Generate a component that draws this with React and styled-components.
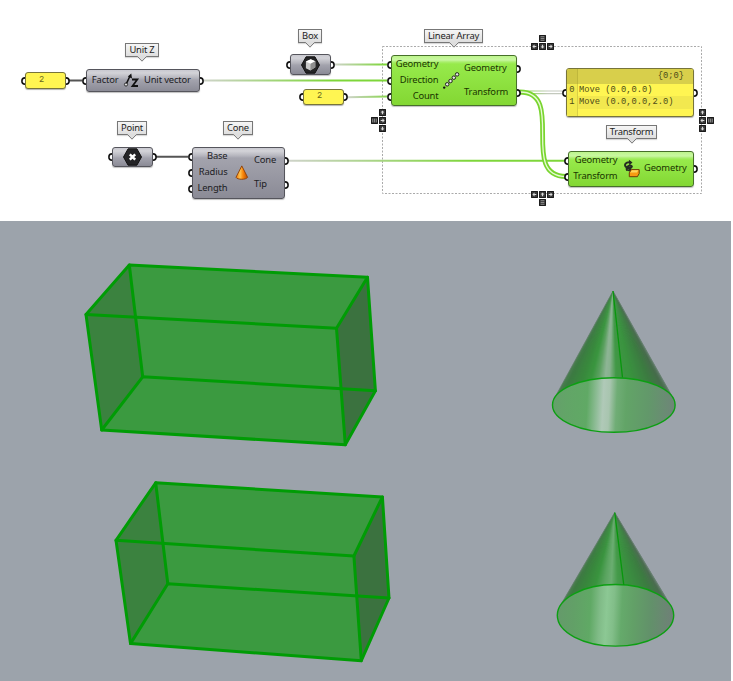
import React from 'react';
import styled, { createGlobalStyle, css } from 'styled-components';

const Global = createGlobalStyle`
  body { margin: 0; background: #fff; font-family: "Noto Sans", "Open Sans", sans-serif; }
  *, *::before, *::after { box-sizing: border-box; }
`;

const Page = styled.main`
  display: flex;
  flex-direction: column;
  width: 733px;
  height: 681px;
  overflow: hidden;
  background: #fff;
`;

const Canvas = styled.section`
  position: relative;
  flex: 0 0 221px;
  background: #fff;
`;

const Viewport = styled.section`
  flex: 1;
  width: 731px;
  background: #9ca3ab;
  svg { display: block; }
`;

const Wires = styled.svg`
  position: absolute;
  inset: 0;
`;

const placed = css`
  position: absolute;
  left: ${(p) => p.$x}px;
  top: ${(p) => p.$y}px;
  width: ${(p) => p.$w}px;
  height: ${(p) => p.$h}px;
`;

const skins = {
  gray: 'linear-gradient(#c9c9d0 0, #d3d3d8 3px, #b4b4bc 8px, #a3a3ad 10px, #8b8b96 100%)',
  green: 'linear-gradient(#bdf58c 0, #c9f7a2 4px, #a9ee6c 6px, #97ea4b 8px, #83d733 100%)',
};

const Node = styled.div`
  ${placed}
  display: flex;
  align-items: center;
  border: 1px solid ${(p) => (p.$skin === 'green' ? '#47702a' : '#55555c')};
  border-radius: 3px;
  background: ${(p) => skins[p.$skin]};
  color: ${(p) => (p.$skin === 'green' ? '#193500' : '#202024')};
  box-shadow: 0 1px 1px rgba(0, 0, 0, 0.25);
`;

const Column = styled.div`
  display: flex;
  flex-direction: column;
  flex: 0 0 ${(p) => p.$w}px;
  height: ${(p) => p.$h}px;
`;

const Row = styled.div`
  position: relative;
  display: flex;
  flex: 1;
  align-items: center;
  justify-content: ${(p) => (p.$side === 'in' ? 'flex-end' : 'flex-start')};
  padding-bottom: 2px;
  font-size: 9.4px;
  letter-spacing: -0.14px;
  line-height: 12px;
  white-space: nowrap;
`;

const IconSlot = styled.div`
  display: flex;
  flex: 1;
  align-items: center;
  justify-content: center;
  svg { display: block; flex: none; overflow: visible; }
`;

const Port = styled.span`
  position: absolute;
  top: calc(50% - 4px);
  ${(p) => (p.$side === 'in' ? 'left: -5px' : 'right: -5px')};
  width: 4px;
  height: 8px;
  svg { display: block; }
`;

const Socket = ({ side }) => (
  <Port $side={side}>
    <svg width="4" height="8" viewBox="0 0 4 8">
      <path
        d={side === 'in' ? 'M4 .9A3.1 3.1 0 0 0 4 7.1' : 'M0 .9A3.1 3.1 0 0 1 0 7.1'}
        fill="#fff"
        stroke="#111"
        strokeWidth="1.6"
      />
    </svg>
  </Port>
);

const Tag = styled.div`
  ${placed}
  display: flex;
  align-items: center;
  justify-content: center;
  border: 1px solid #777;
  background: linear-gradient(#f6f6f6, #dedede);
  color: #222;
  font-size: 9.4px;
  letter-spacing: -0.2px;
  line-height: 12px;
  padding-bottom: 1px;
  white-space: nowrap;
  box-shadow: 0 1px 1px rgba(0, 0, 0, 0.15);
  svg {
    position: absolute;
    left: calc(50% - 5px);
    top: 12px;
  }
`;

const Pointer = () => (
  <svg width="10" height="7" viewBox="0 0 10 7">
    <path d="M.8 0v.5L5 5.2 9.2.5V0z" fill="#dedede" />
    <path d="M.8.8 5 5.2 9.2.8" fill="none" stroke="#777" strokeWidth="1" />
  </svg>
);

const ValuePanel = styled.div`
  ${placed}
  display: flex;
  align-items: center;
  padding: 0 0 2px 13px;
  border: 1px solid #77743a;
  border-radius: 3px;
  background: #fff552;
  box-shadow: 0 1px 1px rgba(0, 0, 0, 0.3);
  color: #66651c;
  font: 8.7px "Liberation Mono", monospace;
`;

const DataPanel = styled.div`
  ${placed}
  display: grid;
  grid-template-columns: 11px 1fr;
  grid-template-rows: 15px 12px 13px 1fr;
  border: 1px solid #77743a;
  border-radius: 3px;
  background: #fff552;
  box-shadow: 0 1px 1px rgba(0, 0, 0, 0.3);
  color: #4d4b18;
  font: 8.75px/12px "Liberation Mono", monospace;
`;

const Path = styled.div`
  grid-column: 1 / 3;
  background: linear-gradient(90deg, #d0c745 10px, #bfb73c 10px 11px, #d8cf4b 11px);
  border-radius: 2px 2px 0 0;
  padding: 1px 9px 0 0;
  text-align: right;
`;

const Index = styled.div`
  border-right: 1px solid #d9d045;
  background: #f3ea4e;
  text-align: center;
`;

const Item = styled.div`
  padding-left: 1px;
  background: ${(p) => (p.$alt ? '#f2e84f' : 'transparent')};
`;

const Key = styled.span`
  ${placed}
  display: flex;
  align-items: center;
  justify-content: center;
  border-radius: 1px;
  background: #383838;
  box-shadow: inset 0 0 0 0.7px #111;
`;

const Glyph = ({ type }) => {
  const turn = { up: 0, right: 90, down: 180, left: 270 }[type];
  return (
    <svg width="7" height="7" viewBox="0.5 0.5 7 7">
      {type === 'menu' ? (
        <path d="M2.2 2.2h3.6M2.2 4h3.6M2.2 5.8h3.6" stroke="#aaa" strokeWidth=".7" />
      ) : type === 'lines' ? (
        <path d="M2.2 2.2v3.6M4 2.2v3.6M5.8 2.2v3.6" stroke="#aaa" strokeWidth=".7" />
      ) : (
        <path d="M4 1.9 5.9 4H4.6v1.8H3.4V4H2.1z" fill="#dcdcdc" transform={`rotate(${turn} 4 4)`} />
      )}
    </svg>
  );
};

const keys = [
  [538.5, 34.5, 'menu'], [530.5, 42.5, 'left'], [538.5, 42.5, 'down'], [546.5, 42.5, 'right'],
  [379, 108.5, 'up'], [371, 116.5, 'lines'], [379, 116.5, 'right'], [379, 124.5, 'down'],
  [698.5, 108.5, 'up'], [698.5, 116.5, 'left'], [706.5, 116.5, 'lines'], [698.5, 124.5, 'down'],
  [530.5, 190.5, 'left'], [538.5, 190.5, 'up'], [546.5, 190.5, 'right'], [538.5, 198.5, 'menu'],
];

const tags = [
  ['Unit Z', 125, 43, 34], ['Point', 117, 121, 30], ['Cone', 223, 121, 30],
  ['Box', 298, 29, 24], ['Linear Array', 424, 29, 59], ['Transform', 606, 125, 51],
];

const ZIcon = () => (
  <svg width="15" height="15" viewBox="0 0 15 15">
    <path d="M2 11.5 6 3" stroke="#111" strokeWidth="1.6" />
    <path d="M7.3.5 8 5.4 3.8 3.4z" fill="#111" />
    <circle cx="2" cy="11.5" r="1.6" fill="#ddd" stroke="#111" strokeWidth=".8" />
    <path d="M8 6.5h5.3L8.5 13H14" fill="none" stroke="#111" strokeWidth="1.8" />
  </svg>
);

const ConeIcon = () => (
  <svg width="14" height="16" viewBox="-0.8 0.3 14 16">
    <defs>
      <linearGradient id="orange">
        <stop offset="0" stopColor="#f47a08" />
        <stop offset=".35" stopColor="#ffc34d" />
        <stop offset=".6" stopColor="#f98509" />
        <stop offset="1" stopColor="#b94b00" />
      </linearGradient>
    </defs>
    <path d="M7 1.2 1.2 12.6c1.2 2.6 10.4 2.6 11.6 0z" fill="url(#orange)" stroke="#8c3d05" strokeWidth=".9" strokeLinejoin="round" />
  </svg>
);

const Hexagon = ({ children }) => (
  <svg width="20" height="18" viewBox="0.5 0 20 18">
    <path d="M5.6.8h8.8L19 9l-4.6 8.2H5.6L1 9z" fill="#242426" stroke="#111" strokeLinejoin="round" />
    {children}
  </svg>
);

const PointIcon = () => (
  <Hexagon>
    <path d="M7.3 6.3 12.7 11.7M12.7 6.3 7.3 11.7" stroke="#fff" strokeWidth="2.4" />
  </Hexagon>
);

const BoxIcon = () => (
  <Hexagon>
    <path d="M5.4 5.6 10.2 3.2 14.8 5.2v6l-4.9 3.4-4.5-2.3z" fill="#c9c9c9" />
    <path d="M5.4 5.6 10.2 3.2 14.8 5.2 10.1 7.8z" fill="#fff" />
    <path d="M10.1 7.8 14.8 5.2v6l-4.9 3.4z" fill="#8e8e8e" />
  </Hexagon>
);

const ArrayIcon = () => (
  <svg width="18" height="18" viewBox="0 0 18 18">
    <circle cx="2.2" cy="15.6" r="1.2" fill="#111" />
    {[[5.2, 12.3], [8.5, 9], [11.8, 5.7], [15.1, 2.4]].map(([x, y]) => (
      <circle key={x} cx={x} cy={y} r="1.75" fill="#e8e8e8" stroke="#222" strokeWidth="1" />
    ))}
  </svg>
);

const TransformIcon = () => (
  <svg width="18" height="18" viewBox="-0.5 0 18 18">
    <path d="M8.5 2.5C3 1.6 1.2 5 3.6 7s7 .2 5.4-1-6.2.6-4.4 4.6" fill="none" stroke="#252b22" strokeWidth="2" />
    <path d="M6.4-.2 10 2.6 6.8 5.4zM4.2 10.4l4.4 1.6.2-4.6z" fill="#252b22" />
    <path d="M6.8 12.8 8.9 9.6h7.8v3.9l-1.8 3.2H6.8z" fill="#f99b12" stroke="#6f3a05" strokeWidth="1" strokeLinejoin="round" />
    <path d="M7.7 12.6 9.3 10.2h6.6l-1.5 2.4z" fill="#ffd65a" />
  </svg>
);

function Component({ x, y, w, h, skin = 'gray', rows = 16, ins = [], outs = [], inW, outW, children }) {
  return (
    <Node $x={x} $y={y} $w={w} $h={h} $skin={skin}>
      <Column $w={inW} $h={rows}>
        {ins.map((t, i) => <Row key={i} $side="in"><Socket side="in" />{t}</Row>)}
      </Column>
      <IconSlot>{children}</IconSlot>
      <Column $w={outW} $h={rows}>
        {outs.map((t, i) => <Row key={i} $side="out">{t}<Socket side="out" /></Row>)}
      </Column>
    </Node>
  );
}

const Fade = ({ id, x1, x2 }) => (
  <linearGradient id={id} gradientUnits="userSpaceOnUse" x1={x1} x2={x2} y1="0" y2="0">
    <stop offset="0" stopColor="#cfd3ca" />
    <stop offset="1" stopColor="#7ed63a" />
  </linearGradient>
);

function WireLayer() {
  const bend = 'M520 92C566 92 519 176.5 566 176.5';
  return (
    <Wires width="733" height="221" fill="none">
      <defs>
        <Fade id="f1" x1="203" x2="330" />
        <Fade id="f2" x1="334" x2="385" />
        <Fade id="f3" x1="347" x2="395" />
        <Fade id="f4" x1="288" x2="470" />
        <linearGradient id="f5" gradientUnits="userSpaceOnUse" x1="520" x2="548" y1="0" y2="0">
          <stop offset="0" stopColor="#7ed63a" />
          <stop offset="1" stopColor="#c3c9bd" />
        </linearGradient>
      </defs>
      <rect x="382.5" y="46.5" width="319" height="147" stroke="#aaa" strokeDasharray="2 1.5" />
      <g strokeWidth="2">
        <path d="M69 80.5H82M156 156.8H188" stroke="#555" />
        <path d="M204 80.6H387" stroke="url(#f1)" />
        <path d="M335 64.5H387" stroke="url(#f2)" />
        <path d="M347 97.3L387 96.5" stroke="url(#f3)" />
        <path d="M288 160.8H565" stroke="url(#f4)" />
      </g>
      <path d="M521 91H562M521 93.6H562" stroke="url(#f5)" strokeWidth="1.1" />
      <path d={bend} stroke="#79d52f" strokeWidth="4.8" />
      <path d={bend} stroke="#e7fad5" strokeWidth="1.3" />
    </Wires>
  );
}

const BoxSolid = ({ a, b, c, d, e, f, g, h }) => {
  const p = (...v) => v.map((q) => q.join(',')).join(' ');
  return (
    <g strokeLinejoin="round" strokeLinecap="round">
      <polygon points={p(a, b, c, f, g, h)} fill="#3b9a40" />
      <polygon points={p(a, b, e, h)} fill="#3b823f" />
      <polygon points={p(d, c, f, g)} fill="#3b723f" />
      <g fill="none" stroke="#009c05" strokeWidth="3">
        <polygon points={p(a, b, c, d)} />
        <polygon points={p(h, e, f, g)} />
        <path d={`M${a}L${h}M${b}L${e}M${c}L${f}M${d}L${g}`} />
      </g>
    </g>
  );
};

const shade = (stops, t) => {
  let i = 0;
  while (i < stops.length - 2 && t > stops[i + 1][0]) i += 1;
  const [t0, c0] = stops[i];
  const [t1, c1] = stops[i + 1];
  const k = Math.min(1, Math.max(0, (t - t0) / (t1 - t0)));
  return `rgb(${c0.map((v, n) => Math.round(v + (c1[n] - v) * k)).join(',')})`;
};

function ConeSolid({ id, apex, center, rx, ry, seam, body, base }) {
  const [ax, ay] = apex;
  const [cx, cy] = center;
  // Tangent points from the apex to the base ellipse.
  const s = ry / (cy - ay);
  const half = rx * Math.sqrt(1 - s * s);
  const ty = cy - ry * s;
  const left = cx - half;
  const n = 90;
  const point = (k) => {
    const x = left + (2 * half * k) / n;
    const y = cy - ry * Math.sqrt(Math.max(0, 1 - ((x - cx) / rx) ** 2));
    return [x, y];
  };
  const wedges = Array.from({ length: n }, (_, k) => {
    const p0 = point(k);
    const p1 = point(Math.min(n, k + 2));
    return <path key={k} d={`M${ax} ${ay}L${p0}L${p1}Z`} fill={shade(body, (k + 0.5) / n)} />;
  });
  return (
    <g>
      <defs>
        <linearGradient id={id} gradientUnits="userSpaceOnUse" x1={cx - rx} x2={cx + rx} y1={cy} y2={cy + 6}>
          {base.map(([o, c]) => <stop key={o} offset={o} stopColor={c} />)}
        </linearGradient>
      </defs>
      {wedges}
      <path d={`M${ax} ${ay}L${left} ${ty}M${ax} ${ay}L${cx + half} ${ty}`} stroke="#667f70" strokeWidth=".7" />
      <ellipse cx={cx} cy={cy} rx={rx} ry={ry} fill={`url(#${id})`} stroke="#0c9f12" strokeWidth="1.4" />
      <path d={`M${ax} ${ay}L${seam}`} stroke="#08960d" strokeWidth="1.3" />
    </g>
  );
}

const body1 = [
  [0, [79, 126, 84]], [0.1, [60, 122, 66]], [0.23, [57, 137, 61]], [0.31, [58, 150, 63]],
  [0.37, [91, 160, 96]], [0.43, [143, 181, 150]], [0.465, [135, 178, 142]], [0.52, [66, 152, 71]],
  [0.64, [58, 147, 63]], [0.8, [60, 124, 65]], [0.92, [70, 108, 75]], [1, [100, 125, 110]],
];
const body2 = [
  [0, [82, 126, 86]], [0.1, [60, 122, 65]], [0.22, [57, 135, 61]], [0.32, [58, 148, 63]],
  [0.4, [90, 164, 96]], [0.46, [108, 174, 114]], [0.52, [70, 155, 75]], [0.6, [58, 148, 63]],
  [0.8, [60, 124, 65]], [0.92, [74, 108, 79]], [1, [105, 128, 114]],
];
const base1 = [
  [0, '#659f6b'], [0.12, '#62a567'], [0.28, '#60a965'], [0.36, '#90bd98'], [0.41, '#b0c9b8'],
  [0.46, '#a8c5af'], [0.52, '#70ad76'], [0.6, '#62a467'], [0.78, '#62986a'], [1, '#6f8479'],
];
const base2 = [
  [0, '#659a6b'], [0.14, '#62a067'], [0.28, '#60a965'], [0.36, '#80bb87'], [0.42, '#8cc894'],
  [0.48, '#82be89'], [0.55, '#65aa6b'], [0.65, '#62a067'], [0.8, '#62916a'], [1, '#707f78'],
];

function Scene() {
  return (
    <svg width="731" height="460" viewBox="0 221 731 460">
      <BoxSolid
        a={[86, 314.5]} b={[129.3, 265]} c={[367.5, 277.3]} d={[336.5, 328.3]}
        e={[142.7, 376.8]} f={[375.4, 390.8]} g={[345.3, 444.8]} h={[101.7, 430]}
      />
      <BoxSolid
        a={[116, 540.3]} b={[155.7, 482.8]} c={[382.4, 496.9]} d={[353.9, 556]}
        e={[167.8, 583.7]} f={[389, 598]} g={[361.3, 660.7]} h={[130.5, 643.6]}
      />
      <ConeSolid id="base1" apex={[613, 291]} center={[613.8, 405]} rx={61.3} ry={27.3} seam={[622.5, 377.5]} body={body1} base={base1} />
      <ConeSolid id="base2" apex={[614.7, 512.5]} center={[615.5, 615.3]} rx={58.2} ry={30.8} seam={[623.8, 585]} body={body2} base={base2} />
    </svg>
  );
}

const PortRail = styled.span`
  position: absolute;
  inset: 0;
`;

const Ports = () => (
  <PortRail><Socket side="in" /><Socket side="out" /></PortRail>
);

export default function App() {
  return (
    <Page>
      <Global />
      <Canvas>
        <WireLayer />
        {tags.map(([t, x, y, w]) => (
          <Tag key={t} $x={x} $y={y} $w={w} $h={14}>{t}<Pointer /></Tag>
        ))}
        <ValuePanel $x={25} $y={72} $w={41} $h={17}>2<Ports /></ValuePanel>
        <ValuePanel $x={303} $y={89} $w={41} $h={16}>2<Ports /></ValuePanel>
        <Component x={86} y={69} w={114} h={23} inW={31.5} outW={55} ins={['Factor']} outs={['Unit vector']}>
          <ZIcon />
        </Component>
        <Component x={112} y={147} w={41} h={20} inW={0} outW={0} ins={['']} outs={['']}>
          <PointIcon />
        </Component>
        <Component x={290} y={54} w={41} h={21} inW={0} outW={0} ins={['']} outs={['']}>
          <BoxIcon />
        </Component>
        <Component x={192} y={147} w={93} h={52} rows={48} inW={34.5} outW={30} ins={['Base', 'Radius', 'Length']} outs={['Cone', 'Tip']}>
          <ConeIcon />
        </Component>
        <Component skin="green" x={391} y={55} w={126} h={51} rows={48} inW={46.5} outW={52} ins={['Geometry', 'Direction', 'Count']} outs={['Geometry', 'Transform']}>
          <ArrayIcon />
        </Component>
        <DataPanel $x={566} $y={68} $w={128} $h={49}>
          <Path>{'{0;0}'}</Path>
          <Index>0</Index><Item>Move (0.0,0.0)</Item>
          <Index>1</Index><Item $alt>Move (0.0,0.0,2.0)</Item>
          <Index /><Item />
          <Ports />
        </DataPanel>
        <Component skin="green" x={568} y={151} w={126} h={36} rows={32} inW={48.5} outW={49} ins={['Geometry', 'Transform']} outs={['Geometry']}>
          <TransformIcon />
        </Component>
        {keys.map(([x, y, type]) => (
          <Key key={`${x}-${y}`} $x={x} $y={y} $w={7} $h={7}><Glyph type={type} /></Key>
        ))}
      </Canvas>
      <Viewport><Scene /></Viewport>
    </Page>
  );
}
